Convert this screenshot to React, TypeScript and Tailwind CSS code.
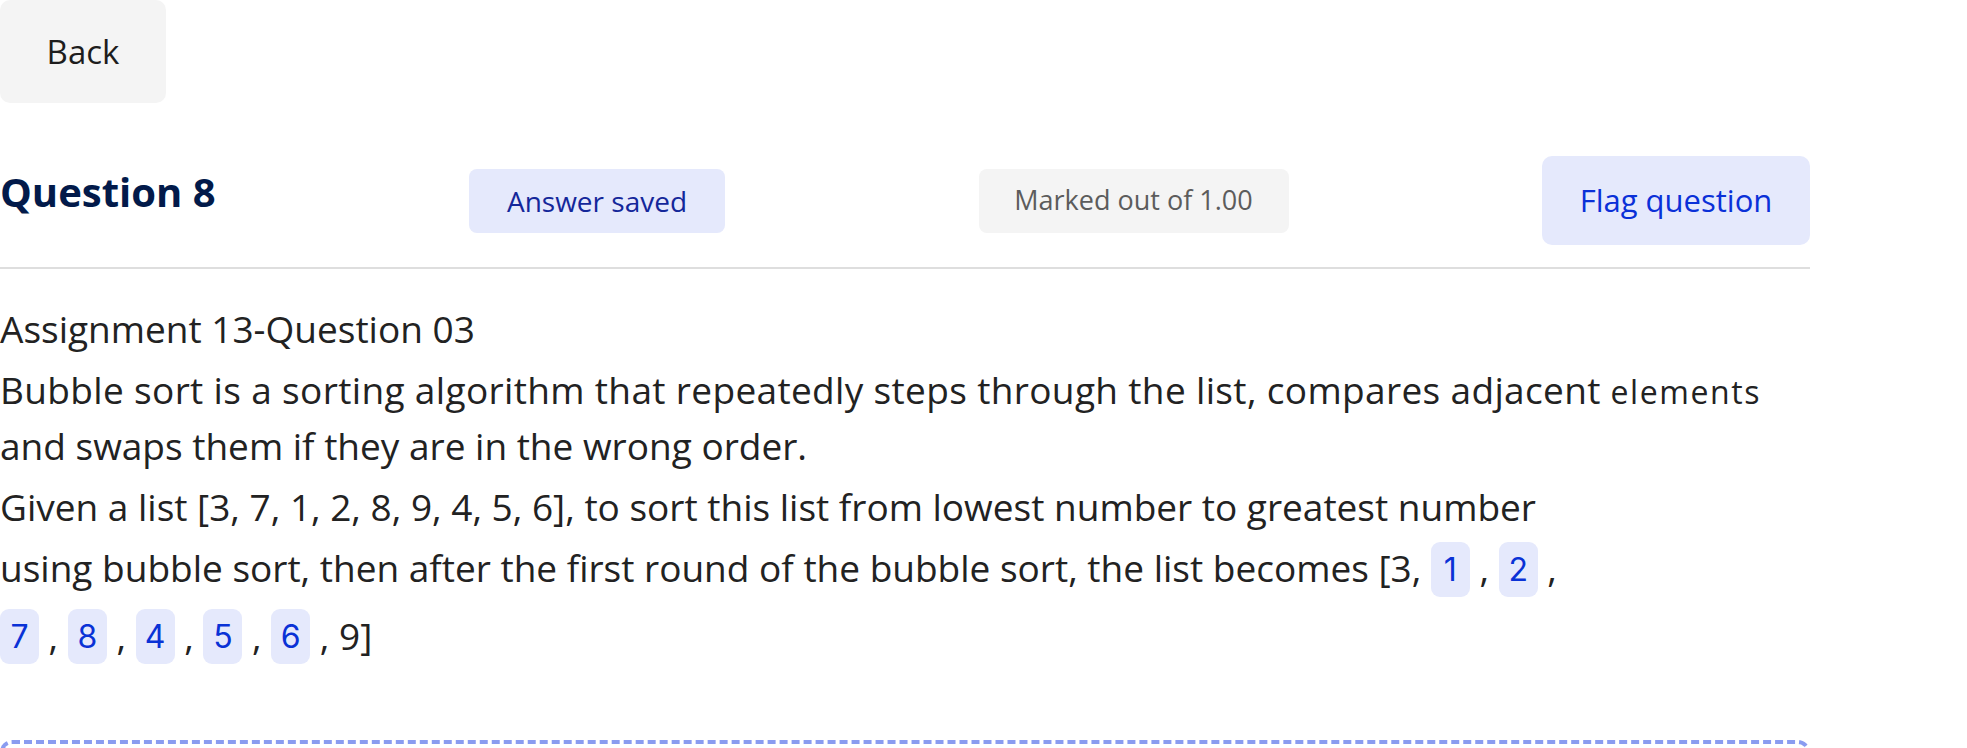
import React from "react";

function Blank({ v }: { v: string }) {
  return (
    <span className="inline-block align-middle mb-[6px] w-[39px] h-[55px] leading-[55px] rounded-[9px] bg-[#e5e9fc] text-center text-[32px] text-[#0a32d6] font-['Inter',sans-serif]">
      {v}
    </span>
  );
}

export default function App() {
  return (
    <div className="w-full min-h-screen bg-white font-['Open_Sans',sans-serif] text-[#222222]">
      <div className="w-[1810px] flex flex-col">
        <button className="w-[166px] h-[103px] rounded-[10px] bg-[#f4f4f4] text-[33px] text-[#1d1d1d]">
          Back
        </button>

        <div className="mt-[53px] h-[89px] flex items-center justify-between">
          <h2 className="mb-[18px] text-[40px] leading-[54px] font-bold text-[#021a4a]">Question 8</h2>
          <span className="w-[256px] h-[64px] rounded-[8px] bg-[#e5e9fc] flex items-center justify-center text-[28px] text-[#14279a]">
            Answer saved
          </span>
          <span className="w-[310px] h-[64px] rounded-[8px] bg-[#f4f4f4] flex items-center justify-center text-[27px] text-[#5c5c5c]">
            Marked out of 1.00
          </span>
          <button className="w-[268px] h-[89px] rounded-[10px] bg-[#e5e9fc] text-[31px] text-[#0a30d8]">
            Flag question
          </button>
        </div>

        <div className="mt-[22px] h-[2px] bg-[#dedede]" />

        <div className="mt-[33px] text-[37px] leading-[54px]">
          <p className="mb-[7px]">Assignment 13-Question 03</p>
          <p className="mb-[7px]">
            <span className="tracking-[0.35px]">
              Bubble sort is a sorting algorithm that repeatedly steps through the list, compares adjacent
            </span>{" "}
            <span className="text-[32px] tracking-[1.6px]">elements</span>
            <br />
            and swaps them if they are in the wrong order.
          </p>
          <p className="mb-[7px]">Given a list [3, 7, 1, 2, 8, 9, 4, 5, 6], to sort this list from lowest number to greatest number</p>
          <p>
            using bubble sort, then after the first round of the bubble sort, the list becomes [3, <Blank v="1" /> , <Blank v="2" /> ,
          </p>
          <p className="mt-[6px]">
            <Blank v="7" /> , <Blank v="8" /> , <Blank v="4" /> , <Blank v="5" /> , <Blank v="6" /> , 9]
          </p>
        </div>

        <div className="mt-[70px] h-[120px] rounded-[12px] border-[4px] border-dashed border-[#8a9cf0]" />
      </div>
    </div>
  );
}
